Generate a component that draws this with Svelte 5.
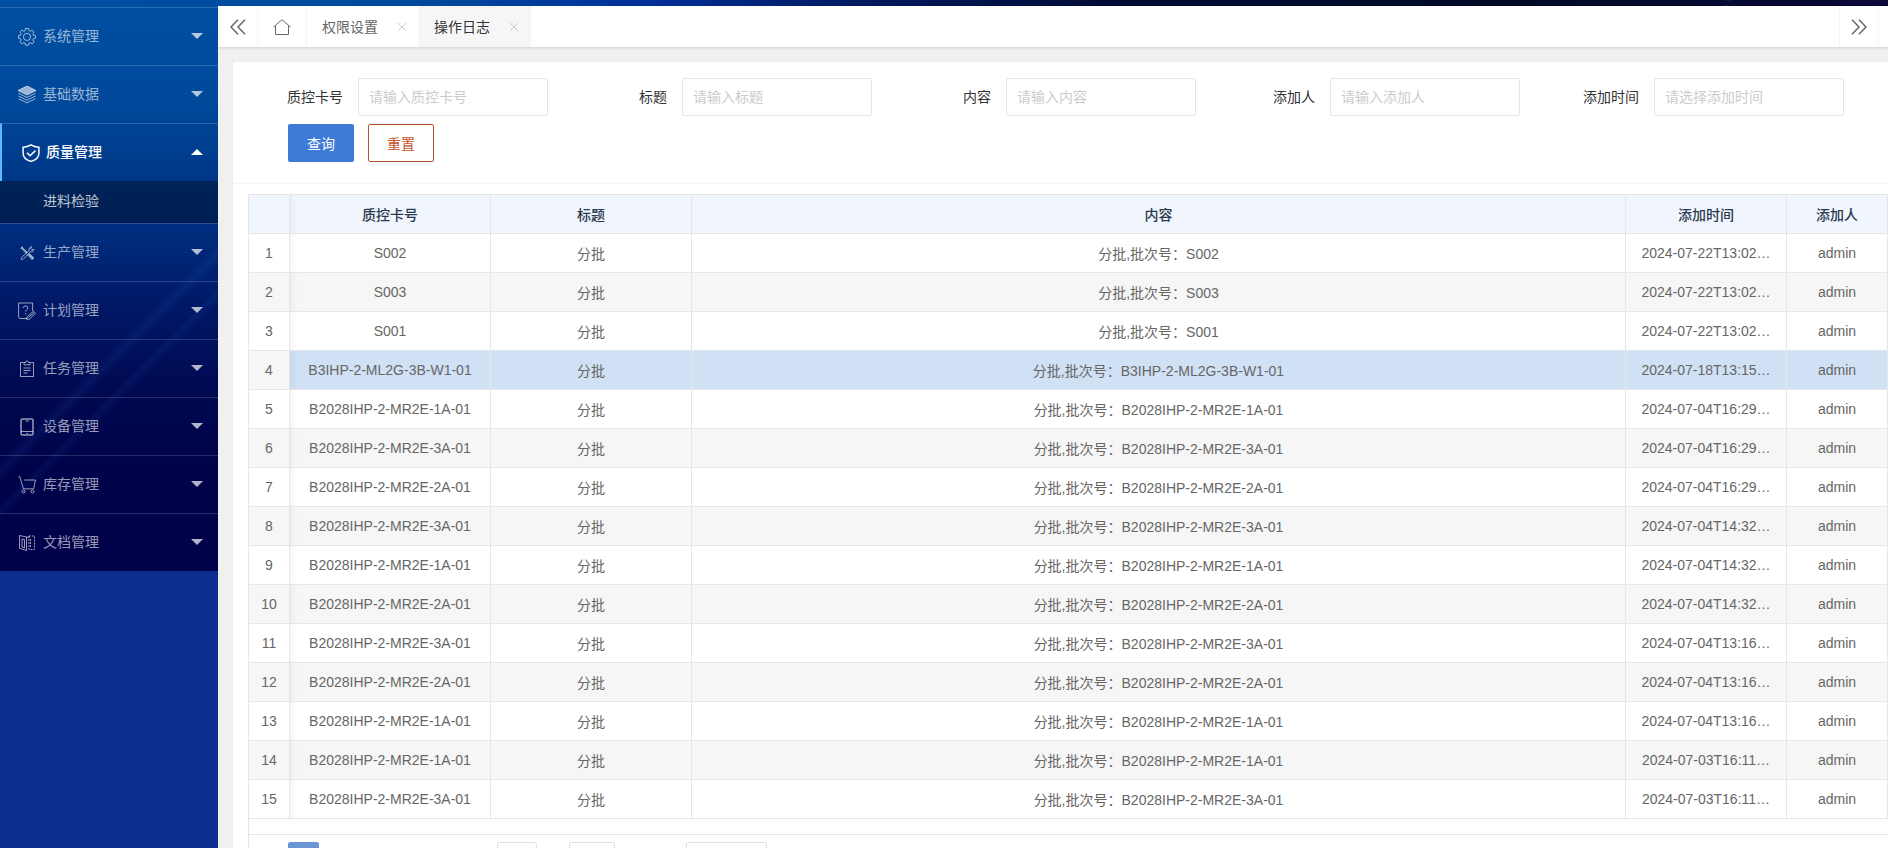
<script>
  const menus = [
    { icon: 'gear', label: '系统管理' },
    { icon: 'layers', label: '基础数据' },
    { icon: 'shield', label: '质量管理', open: true, children: ['进料检验'] },
    { icon: 'tools', label: '生产管理' },
    { icon: 'plan', label: '计划管理' },
    { icon: 'task', label: '任务管理' },
    { icon: 'device', label: '设备管理' },
    { icon: 'cart', label: '库存管理' },
    { icon: 'doc', label: '文档管理' }
  ];

  let activeTab = $state('操作日志');
  const tabs = ['权限设置', '操作日志'];

  const fields = [
    { id: 'card', label: '质控卡号', hint: '请输入质控卡号' },
    { id: 'title', label: '标题', hint: '请输入标题' },
    { id: 'content', label: '内容', hint: '请输入内容' },
    { id: 'creator', label: '添加人', hint: '请输入添加人' },
    { id: 'created', label: '添加时间', hint: '请选择添加时间' }
  ];

  let selected = $state(3);
  const rows = [
    ['S002', '2024-07-22T13:02…'],
    ['S003', '2024-07-22T13:02…'],
    ['S001', '2024-07-22T13:02…'],
    ['B3IHP-2-ML2G-3B-W1-01', '2024-07-18T13:15…'],
    ['B2028IHP-2-MR2E-1A-01', '2024-07-04T16:29…'],
    ['B2028IHP-2-MR2E-3A-01', '2024-07-04T16:29…'],
    ['B2028IHP-2-MR2E-2A-01', '2024-07-04T16:29…'],
    ['B2028IHP-2-MR2E-3A-01', '2024-07-04T14:32…'],
    ['B2028IHP-2-MR2E-1A-01', '2024-07-04T14:32…'],
    ['B2028IHP-2-MR2E-2A-01', '2024-07-04T14:32…'],
    ['B2028IHP-2-MR2E-3A-01', '2024-07-04T13:16…'],
    ['B2028IHP-2-MR2E-2A-01', '2024-07-04T13:16…'],
    ['B2028IHP-2-MR2E-1A-01', '2024-07-04T13:16…'],
    ['B2028IHP-2-MR2E-1A-01', '2024-07-03T16:11…'],
    ['B2028IHP-2-MR2E-3A-01', '2024-07-03T16:11…']
  ];
</script>

{#snippet menuIcon(name)}
  <svg class="menu-icon" viewBox="0 0 18 18" aria-hidden="true">
    {#if name === 'gear'}
      <path d="M7.500 .5h3l.4 2.200 1.300.6 1.900-1.300 2 2-1.300 1.900.6 1.300 2.100.4v2.600l-2.100.5-.6 1.300 1.300 1.900-2 2-1.900-1.300-1.300.6-.4 2H7.500l-.4-2-1.300-.6-1.900 1.300-2-2 1.300-1.900-.6-1.300L.5 10.200V7.600l2.100-.4.6-1.300L1.900 4l2-2 1.900 1.300 1.300-.6z" />
      <circle cx="9" cy="8.900" r="3.600" />
    {:else if name === 'layers'}
      <path class="solid" d="M9 0l9 4.500L9 9 0 4.500z" />
      <path d="M.5 7.300L9 11.500l8.500-4.200M.5 10L9 14.200 17.500 10M.5 12.700L9 16.900l8.500-4.200" />
    {:else if name === 'shield'}
      <path class="bold" d="M9 .9c2.400 1.500 5 2.200 7.900 2.300v6c0 4-3.400 6.800-7.900 8.200-4.500-1.400-7.900-4.200-7.900-8.200v-6C4 3.100 6.600 2.400 9 .9zM5 8.800l3 3 5.500-5.200" />
    {:else if name === 'tools'}
      <path class="heavy" d="M3.500 3.500L9 9M11 10.500l4 4" />
      <path d="M2.500 4.500l2-2M9.500 11l1.500-1.500 4.700 4.500-1.700 1.700zM13.500 2.500l-2.300 1.800-.2 2.200-7.400 6.900c-1.500 1.700.3 3.100 1.700 1.700l7-7.300 2.400-.2 1.300-2.300-2 .5-1.200-1.200z" />
    {:else if name === 'plan'}
      <path d="M9 16.500H2.500Q.6 16.500.6 14.600V1h14v8M5.300 6q0-2 2.300-2t2.300 2c0 1.400-2.300 1.700-2.300 3.500M7.600 11v1.500M8.500 17.300l1-3 6-5 2 2-6 5.800zM10.500 15.500l5.500-4.800" />
    {:else if name === 'task'}
      <path d="M5.500 2.500h-3v14h13v-14h-3M6 2.500h1.500Q7.500 1 9 1t1.500 1.500H12v2.300H6zM5.500 8h7M5.500 10.500h7M5.500 13h4" />
    {:else if name === 'device'}
      <rect class="bold" x="3" y="1" width="12" height="16" rx="1.500" />
      <path d="M3 13.500h12M7.500 3h3.500M8.500 15.500h1.500" />
    {:else if name === 'cart'}
      <path d="M.3 .8h1.500l3.600 12h10.300L17.400 4H6" />
      <circle cx="5.500" cy="15.500" r="1.500" />
      <circle cx="14.500" cy="15.500" r="1.500" />
    {:else if name === 'doc'}
      <path d="M1.500 1.500v12.700l7 2.300V3zM8.500 3H11M4 5v8l2.500.7V5.600z" />
      <path class="dash" d="M11 2h5.500v13.500h-5.500zM12.500 5v8" />
    {/if}
  </svg>
{/snippet}

<div class="app">
  <nav class="side">
    {#each menus as menu}
      <button class="menu" class:open={menu.open}>
        {@render menuIcon(menu.icon)}
        <span>{menu.label}</span>
        <i class="caret"></i>
      </button>
      {#each menu.children ?? [] as child}
        <a class="submenu" href="#incoming">{child}</a>
      {/each}
    {/each}
  </nav>

  <main class="main">
    <header class="tabs">
      <button class="scroll" aria-label="向左">
        <svg width="16" height="16" viewBox="0 0 16 16"><path d="M8 .8L1 8l7 7.200M15 .8L8 8l7 7.200" /></svg>
      </button>
      <button class="home" aria-label="首页">
        <svg width="18" height="16" viewBox="0 0 18 16"><path d="M.5 8L9 .7 17.500 8M2.500 7v8.500h13V7" /></svg>
      </button>
      {#each tabs as tab}
        <button class="tab" class:active={tab === activeTab} onclick={() => (activeTab = tab)}>
          <span>{tab}</span>
          <svg width="8" height="8" viewBox="0 0 8 8"><path d="M0 0l8 8M8 0L0 8" /></svg>
        </button>
      {/each}
      <button class="scroll next" aria-label="向右">
        <svg width="16" height="16" viewBox="0 0 16 16"><path d="M1 .8L8 8l-7 7.200M8 .8L15 8l-7 7.200" /></svg>
      </button>
    </header>

    <section class="card">
      <form class="search" onsubmit={(e) => e.preventDefault()}>
        {#each fields as field}
          <div class="field">
            <label for={field.id}>{field.label}</label>
            <input id={field.id} type="text" placeholder={field.hint} />
          </div>
        {/each}
        <div class="actions">
          <button class="btn primary" type="submit">查询</button>
          <button class="btn reset" type="reset">重置</button>
        </div>
      </form>

      <div class="grid">
        <table>
          <colgroup>
            <col class="w-index" />
            <col class="w-card" />
            <col class="w-card" />
            <col />
            <col class="w-time" />
            <col class="w-user" />
          </colgroup>
          <thead>
            <tr>
              <th></th>
              <th>质控卡号</th>
              <th>标题</th>
              <th>内容</th>
              <th>添加时间</th>
              <th>添加人</th>
            </tr>
          </thead>
          <tbody>
            {#each rows as [card, time], i}
              <tr class:selected={i === selected} onclick={() => (selected = i)}>
                <td>{i + 1}</td>
                <td>{card}</td>
                <td>分批</td>
                <td>分批,批次号：{card}</td>
                <td>{time}</td>
                <td>admin</td>
              </tr>
            {/each}
          </tbody>
        </table>
        <footer class="pager">
          <button class="current" aria-label="第1页"></button>
          <input class="page-no" type="text" aria-label="页码" />
          <button class="go" aria-label="确定"></button>
          <select aria-label="每页条数"></select>
        </footer>
      </div>
    </section>
  </main>
</div>

<style>
  :global(body) {
    overflow: hidden;
  }

  .app {
    display: flex;
    height: 100vh;
    padding-top: 6px;
    box-sizing: border-box;
    overflow: hidden;
    font-family: 'Liberation Sans', 'Noto Sans CJK SC', sans-serif;
    font-size: 14px;
    color: #333;
    background:
      linear-gradient(120deg, transparent 49%, #1560b0 50%, transparent 51%) 1720px 0 / 16px 6px no-repeat,
      linear-gradient(90deg, #004fa2 0%, #004a9c 22%, #00309a 34%, #00195c 46%, #000a32 60%, #000a26 80%, #0a0838 100%);
  }

  button,
  input,
  select {
    font: inherit;
    box-sizing: border-box;
    margin: 0;
  }

  button {
    border: 0;
    padding: 0;
    background: none;
    cursor: pointer;
  }

  svg {
    display: block;
    fill: none;
    stroke: currentColor;
  }

  .side {
    flex: 0 0 218px;
    padding-top: 1px;
    box-sizing: border-box;
    background:
      linear-gradient(135deg, transparent 42%, rgba(40, 100, 200, 0.12) 44%, transparent 46%, transparent 50%, rgba(40, 100, 200, 0.1) 51%, transparent 53%) 0 220px / 218px 340px no-repeat,
      linear-gradient(#004fa2 0, #00489a 100px, #003888 170px, #002e80 220px, #001866 300px, #000850 390px, #00034a 460px, #00014a 565px, #0d2e91 565px);
  }

  .menu {
    display: flex;
    align-items: center;
    gap: 7px;
    width: 100%;
    height: 58px;
    padding: 0 15px 2px 18px;
    border-top: 1px solid rgba(255, 255, 255, 0.16);
    color: rgba(255, 255, 255, 0.6);
  }

  .menu span {
    padding-bottom: 2px;
  }

  .menu.open {
    border-left: 2px solid #5fb8ff;
    padding-left: 20px;
    gap: 6px;
    color: #fff;
    font-weight: 500;
  }

  .menu-icon {
    width: 18px;
    height: 18px;
    margin-top: 2px;
  }

  .menu-icon .solid {
    fill: currentColor;
  }

  .menu-icon .bold {
    stroke-width: 1.5;
  }

  .menu-icon .heavy {
    stroke-width: 2;
  }

  .menu-icon .dash {
    stroke-dasharray: 2 1;
  }

  .caret {
    margin-left: auto;
    border: 6px solid transparent;
    border-top-color: rgba(255, 255, 255, 0.7);
    border-bottom-width: 0;
  }

  .open .caret {
    border-top-width: 0;
    border-bottom: 6px solid #fff;
  }

  .submenu {
    display: block;
    height: 42px;
    padding-left: 43px;
    line-height: 40px;
    box-sizing: border-box;
    color: rgba(255, 255, 255, 0.75);
    text-decoration: none;
    background: rgba(0, 0, 0, 0.35);
  }

  .main {
    flex: 1;
    min-width: 0;
    background: #f0f0f0;
  }

  .tabs {
    display: flex;
    height: 41px;
    background: #fff;
    border-bottom: 1px solid #dedede;
    box-shadow: 0 1px 2px rgba(0, 0, 0, 0.08);
    color: #666;
  }

  .tabs button {
    display: flex;
    align-items: center;
    justify-content: center;
    border-right: 1px solid #f6f6f6;
    color: inherit;
  }

  .tabs .scroll {
    width: 40px;
  }

  .scroll svg {
    stroke-width: 1.5;
  }

  .tabs .home {
    width: 49px;
  }

  .tabs .tab {
    gap: 20px;
    padding: 0 12px 0 15px;
  }

  .tab span {
    padding-bottom: 2px;
  }

  .tab svg {
    color: #ccc;
  }

  .tabs .tab.active {
    background: #f6f6f6;
    color: #333;
  }

  .tabs .next {
    margin-left: auto;
    margin-right: 9px;
    border-left: 1px solid #f6f6f6;
  }

  .card {
    margin: 14px 0 0 15px;
    background: #fff;
    border-radius: 2px 0 0 0;
  }

  .search {
    display: flex;
    flex-wrap: wrap;
    gap: 8px 24px;
    padding: 16px 15px 21px;
    border-bottom: 1px solid #f6f6f6;
  }

  .field {
    display: flex;
    align-items: center;
  }

  .field label {
    width: 95px;
    padding: 0 15px 2px 0;
    text-align: right;
  }

  .field input {
    width: 190px;
    height: 38px;
    padding: 0 10px;
    border: 1px solid #e6e6e6;
    border-radius: 2px;
    outline: 0;
  }

  .field input::placeholder {
    color: #ccc;
  }

  .actions {
    display: flex;
    gap: 14px;
    width: 100%;
    padding-left: 40px;
  }

  .btn {
    width: 66px;
    height: 38px;
    border-radius: 2px;
  }

  .primary {
    background: #3d7bd6;
    color: #fff;
  }

  .reset {
    border: 1px solid #b5532d;
    color: #c2532b;
    background: #fff;
  }

  .grid {
    margin: 10px 0 0 15px;
    border: 1px solid #e6e6e6;
    border-right: 0;
  }

  table {
    width: 100%;
    table-layout: fixed;
    border-collapse: separate;
    border-spacing: 0;
    text-align: center;
    color: #666;
  }

  .w-index {
    width: 41px;
  }

  .w-card {
    width: 201px;
  }

  .w-time {
    width: 161px;
  }

  .w-user {
    width: 101px;
  }

  th,
  td {
    height: 38px;
    padding: 0;
    border-right: 1px solid #e6e6e6;
    border-bottom: 1px solid #e6e6e6;
    white-space: nowrap;
  }

  th {
    background: #f1f5fd;
    color: #2b3b4e;
    font-weight: 500;
  }

  tbody tr:nth-child(even) {
    background: #f6f6f6;
  }

  tbody tr.selected td:not(:first-child) {
    background: #d0e0f5;
  }

  th:nth-child(2),
  td:nth-child(2) {
    box-shadow: inset 8px 0 8px -8px rgba(0, 0, 0, 0.08);
  }

  .pager {
    display: flex;
    margin-top: 15px;
    padding: 7px 0 0 39px;
    border-top: 1px solid #e6e6e6;
  }

  .pager > * {
    height: 26px;
    border: 1px solid #e2e2e2;
    border-radius: 2px;
    background: #fff;
  }

  .pager .current {
    width: 31px;
    border-color: #6c95d4;
    background: #6c95d4;
  }

  .page-no {
    width: 40px;
    margin-left: 178px;
  }

  .go {
    width: 46px;
    margin-left: 32px;
  }

  .pager select {
    width: 81px;
    margin-left: 71px;
    appearance: none;
  }
</style>
